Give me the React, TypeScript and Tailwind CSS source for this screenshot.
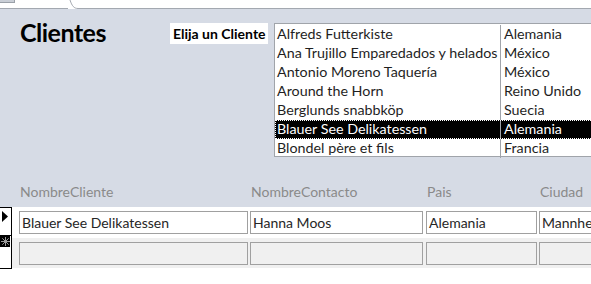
const clientes = [
  { nombre: "Alfreds Futterkiste", pais: "Alemania" },
  { nombre: "Ana Trujillo Emparedados y helados", pais: "México" },
  { nombre: "Antonio Moreno Taquería", pais: "México" },
  { nombre: "Around the Horn", pais: "Reino Unido" },
  { nombre: "Berglunds snabbköp", pais: "Suecia" },
  { nombre: "Blauer See Delikatessen", pais: "Alemania" },
  { nombre: "Blondel père et fils", pais: "Francia" },
];

const selected = 5;

const columnas = [
  { label: "NombreCliente", w: "w-[229px]", ml: "ml-[7px]", value: "Blauer See Delikatessen" },
  { label: "NombreContacto", w: "w-[173px]", ml: "ml-[2px]", value: "Hanna Moos" },
  { label: "Pais", w: "w-[111px]", ml: "ml-[3px]", value: "Alemania" },
  { label: "Ciudad", w: "w-[120px]", ml: "ml-[2px]", value: "Mannheim" },
];

export default function App() {
  return (
    <div className="w-[591px] h-[284px] overflow-hidden bg-white font-['Lato','Liberation_Sans',sans-serif]">
      {/* pestaña superior */}
      <div className="h-[9px] flex items-start border-b border-[#a3a8b0] relative">
        <div className="w-[15px] h-[3px] shrink-0 bg-[#c9ced6] border-b border-r border-[#9aa0a8]" />
        <div className="ml-[10px] h-[2px] overflow-hidden">
          <div className="-mt-[12px] text-[13px] font-bold text-[#d03030] leading-[14px]">Clientes</div>
        </div>
        <svg className="absolute left-[68px] top-0" width="14" height="10" viewBox="0 0 14 10">
          <rect x="0" y="0" width="14" height="9" fill="white" />
          <path d="M2 0 C4 6 6 8.5 10 8.5 L14 8.5" stroke="#a3a8b0" fill="none" />
        </svg>
      </div>

      {/* encabezado del formulario */}
      <div className="h-[198px] bg-[#d6dbe5] flex flex-col">
        <div className="flex items-start">
          <div className="ml-[20px] mt-[8px] w-[150px] shrink-0 text-[25px] font-bold leading-[30px] text-black tracking-[-0.5px]">
            Clientes
          </div>
          <div className="mt-[14px] w-[98px] h-[21px] shrink-0 bg-white pl-[3px] text-[14px] font-bold leading-[21px] text-black whitespace-nowrap">
            Elija un Cliente
          </div>
          <div className="ml-[6px] mt-[14px] w-[340px] h-[134px] shrink-0 bg-white border border-[#a0a4aa] py-[1px] text-[14.3px] text-[#1f1f1f]">
            {clientes.map((c, i) => (
              <div
                key={c.nombre}
                className={
                  i === selected
                    ? "h-[19px] flex bg-black text-white outline outline-1 outline-dotted outline-white -outline-offset-1"
                    : "h-[19px] flex"
                }
              >
                <div className="w-[225px] shrink-0 pl-[2px] whitespace-nowrap leading-[17px]">{c.nombre}</div>
                <div className="h-[19px] border-l border-[#a0a4aa] pl-[3px] leading-[17px] whitespace-nowrap">
                  {c.pais}
                </div>
              </div>
            ))}
          </div>
        </div>
        <div className="flex mt-[26px] text-[14px] text-[#8a8a8a] leading-[18px]">
          <div className="w-[12px] shrink-0" />
          {columnas.map((c) => (
            <div key={c.label} className={`${c.w} ${c.ml} pl-[1px] shrink-0 whitespace-nowrap`}>
              {c.label}
            </div>
          ))}
        </div>
      </div>

      {/* detalle */}
      <div className="flex h-[62px]">
        <div className="w-[12px] shrink-0 flex flex-col border-y border-r border-black">
          <div className="h-[28px] border-b border-black flex items-start pl-[2px] pt-[3px]">
            <svg width="7" height="11" viewBox="0 0 7 11">
              <path d="M0 0 L6 5.5 L0 11 Z" fill="black" />
            </svg>
          </div>
          <div className="flex-1">
            <div className="w-[10px] h-[11px] bg-black flex items-center justify-center">
              <svg width="9" height="9" viewBox="0 0 9 9" stroke="#9a9a9a" strokeWidth="1">
                <path d="M4.5 0 V9 M0 4.5 H9 M1.3 1.3 L7.7 7.7 M7.7 1.3 L1.3 7.7" />
              </svg>
            </div>
          </div>
        </div>
        <div className="flex flex-col">
          <div className="h-[31px] flex items-start pt-[4px] bg-white">
            {columnas.map((c) => (
              <div
                key={c.label}
                className={`${c.w} ${c.ml} shrink-0 h-[23px] border border-[#a0a0a0] bg-white px-[2px] text-[14px] leading-[21px] text-[#262626] whitespace-nowrap overflow-hidden`}
              >
                {c.value}
              </div>
            ))}
          </div>
          <div className="h-[30px] flex items-start pt-[4px] bg-[#f0f0f0]">
            {columnas.map((c) => (
              <div
                key={c.label}
                className={`${c.w} ${c.ml} shrink-0 h-[23px] border border-[#a0a0a0] bg-[#f0f0f0]`}
              />
            ))}
          </div>
        </div>
      </div>
    </div>
  );
}
